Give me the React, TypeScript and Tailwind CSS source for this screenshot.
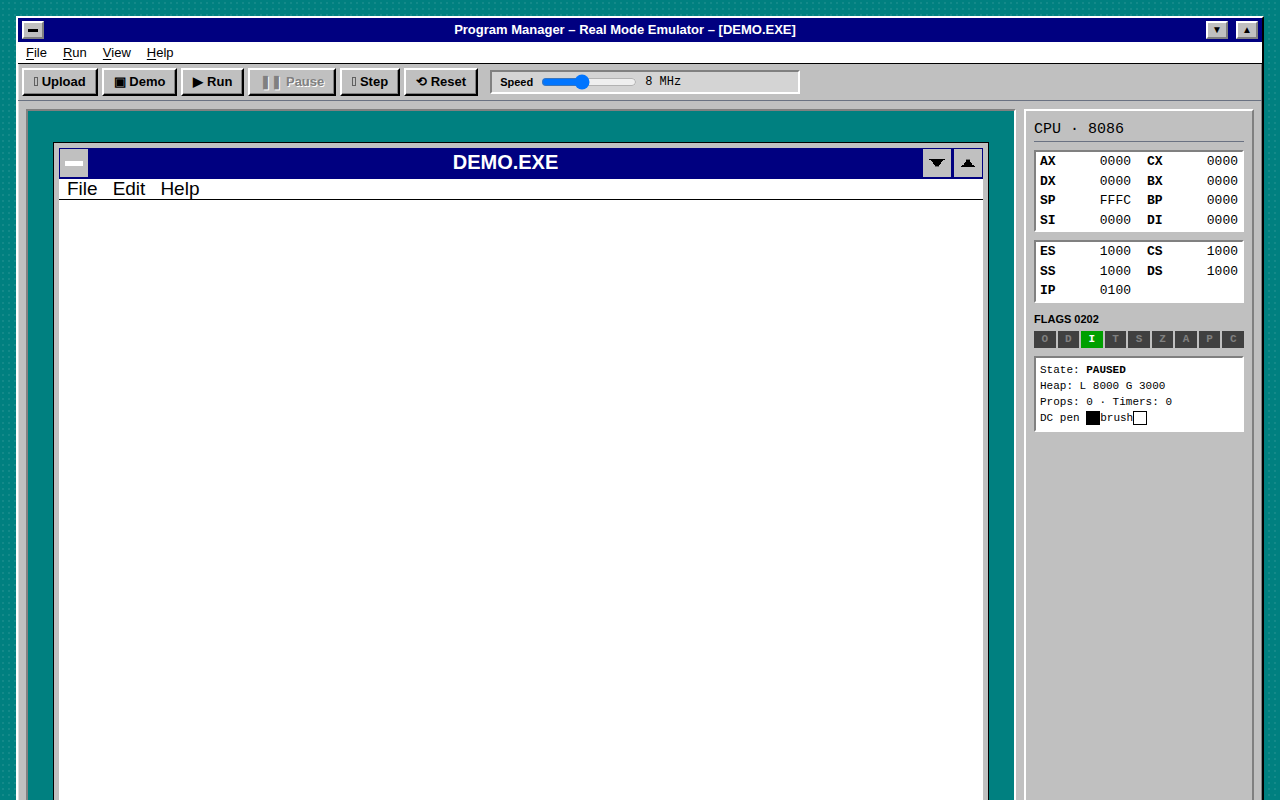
import { useState } from "react"
import type { ReactNode } from "react"

const menus = ["File", "Run", "View", "Help"]

// small outlined box, used by the tools that have no symbol of their own
const boxIcon = <span className="inline-block h-[9px] w-1 border border-[#606060]" />

const tools = [
  { icon: boxIcon, label: "Upload" },
  { icon: "▣", label: "Demo" },
  { icon: "▶", label: "Run" },
  { icon: "❚❚", label: "Pause", disabled: true },
  { icon: boxIcon, label: "Step" },
  { icon: "⟲", label: "Reset" },
]

const generalRegs = [
  ["AX", "0000"],
  ["CX", "0000"],
  ["DX", "0000"],
  ["BX", "0000"],
  ["SP", "FFFC"],
  ["BP", "0000"],
  ["SI", "0000"],
  ["DI", "0000"],
]

const segmentRegs = [
  ["ES", "1000"],
  ["CS", "1000"],
  ["SS", "1000"],
  ["DS", "1000"],
  ["IP", "0100"],
]

const flags = ["O", "D", "I", "T", "S", "Z", "A", "P", "C"]
const activeFlags = ["I"]

const sunken = "border-2 border-t-[#808080] border-l-[#808080] border-r-white border-b-white"

function TitleButton({ label, children }: { label: string; children: ReactNode }) {
  return (
    <button
      aria-label={label}
      className="flex h-[18px] w-[22px] items-center justify-center border-2 border-t-white border-l-white border-r-[#808080] border-b-[#808080] bg-[#c0c0c0] text-[10px] leading-none text-black"
    >
      {children}
    </button>
  )
}

function Registers({ regs, className }: { regs: string[][]; className: string }) {
  return (
    <dl className={`${sunken} ${className} grid grid-cols-2 gap-x-4 bg-white px-1 font-['Liberation_Mono',monospace] text-[13px] leading-[19px]`}>
      {regs.map(([name, value]) => (
        <div key={name} className="flex justify-between">
          <dt className="font-bold">{name}</dt>
          <dd>{value}</dd>
        </div>
      ))}
    </dl>
  )
}

function DemoWindow() {
  return (
    <div className="flex flex-1 flex-col border border-black bg-[#c0c0c0] p-[5px]">
      <div className="flex h-[31px] shrink-0 items-start bg-[#000080] p-px">
        <button aria-label="Program menu" className="flex size-7 items-center justify-center bg-[#c0c0c0]">
          <span className="h-[5px] w-[18px] bg-white" />
        </button>
        <h2 className="flex-1 text-center text-[20px] leading-[26px] font-bold text-white">DEMO.EXE</h2>
        <div className="flex gap-[3px]">
          <button aria-label="Minimize program" className="flex size-7 items-center justify-center bg-[#c0c0c0]">
            <svg width="16" height="10" viewBox="0 0 16 10">
              <path d="M0 1h16v1h-2v1h-1v1h-1v2h-1v1h-1v1H6V7H5V6H4V4H3V3H2V2H0z" />
              <path d="M6 8h4v1H6z" fill="#707070" />
            </svg>
          </button>
          <button aria-label="Maximize program" className="flex size-7 items-center justify-center bg-[#c0c0c0]">
            <svg width="16" height="10" viewBox="0 0 16 10">
              <path d="M1 9h14V8h-1V7h-2V5h-1V4h-1V2H6v2H5v1H4v2H2v1H1z" />
              <path d="M6 1h4v1H6z" fill="#707070" />
            </svg>
          </button>
        </div>
      </div>
      <div className="flex h-[21px] shrink-0 gap-[15px] border-b border-black bg-white px-2 text-[19px] leading-5">
        <button>File</button>
        <button>Edit</button>
        <button>Help</button>
      </div>
      <div className="flex-1 bg-white" />
    </div>
  )
}

function Toolbar() {
  const [speed, setSpeed] = useState(8)

  return (
    <div className="flex flex-wrap items-center gap-1 border-b border-gray-500 p-1">
      {tools.map((tool) => (
        <button
          key={tool.label}
          disabled={tool.disabled}
          className="h-7 border-2 border-t-white border-l-white border-r-black border-b-black bg-[#c0c0c0] px-[10px] text-[13px] leading-5 font-bold whitespace-nowrap shadow-[inset_-1px_-1px_0_#808080] disabled:text-[#808080] disabled:[text-shadow:1px_1px_0_#fff]"
        >
          {tool.icon} {tool.label}
        </button>
      ))}
      <div className={`${sunken} ml-2 flex h-6 w-[310px] items-center gap-2 bg-[#d4d4d4] px-2`}>
        <label htmlFor="speed" className="text-[11px] font-bold">
          Speed
        </label>
        <input
          id="speed"
          type="range"
          min={1}
          max={18}
          value={speed}
          onChange={(e) => setSpeed(Number(e.target.value))}
          className="w-24"
        />
        <output htmlFor="speed" className="font-['Liberation_Mono',monospace] text-xs">
          {speed} MHz
        </output>
      </div>
    </div>
  )
}

function CpuPanel() {
  return (
    <aside className="w-[230px] shrink-0 border-2 border-t-white border-l-white border-r-[#808080] border-b-[#808080] p-2">
      <h2 className="mb-2 border-b border-gray-500 font-['Liberation_Mono',monospace] text-[15px] leading-[22px]">
        CPU · 8086
      </h2>
      <Registers regs={generalRegs} className="mb-2 h-[82px]" />
      <Registers regs={segmentRegs} className="mb-2 h-[63px]" />

      <h3 className="mb-1 text-[11px] leading-4 font-bold">FLAGS 0202</h3>
      <div className="mb-2 grid grid-cols-9 gap-[2px] text-center font-['Liberation_Mono',monospace] text-[11px] leading-[17px] font-bold">
        {flags.map((flag) => (
          <span
            key={flag}
            className={activeFlags.includes(flag) ? "bg-[#00a000] text-white" : "bg-[#404040] text-[#808080]"}
          >
            {flag}
          </span>
        ))}
      </div>

      <div className={`${sunken} bg-white p-1 font-['Liberation_Mono',monospace] text-[11px] leading-4`}>
        <p>
          State: <b>PAUSED</b>
        </p>
        <p>Heap: L 8000 G 3000</p>
        <p>Props: 0 · Timers: 0</p>
        <p className="flex items-center whitespace-pre">
          <span>DC pen </span>
          <span className="size-[14px] border border-black bg-black" />
          <span>brush</span>
          <span className="size-[14px] border border-black bg-white" />
        </p>
      </div>
    </aside>
  )
}

export default function App() {
  return (
    <div className="min-h-screen bg-[#008080] bg-[radial-gradient(rgba(255,255,255,0.08)_1px,transparent_1px)] bg-[size:6px_6px] p-4 font-['Liberation_Sans',Arial,sans-serif] text-black">
      <main className="border-2 border-t-white border-l-white border-r-black border-b-black bg-[#c0c0c0] shadow-[inset_1px_1px_0_#dfdfdf,inset_-1px_-1px_0_#808080]">
        <header className="flex h-6 items-center bg-[#000080] px-1">
          <TitleButton label="Control menu">
            <span className="h-[3px] w-[10px] bg-black" />
          </TitleButton>
          <h1 className="flex-1 text-center text-[13px] leading-6 font-bold text-white">
            Program Manager – Real Mode Emulator – [DEMO.EXE]
          </h1>
          <div className="flex gap-2">
            <TitleButton label="Minimize">▼</TitleButton>
            <TitleButton label="Maximize">▲</TitleButton>
          </div>
        </header>

        <nav className="flex h-[22px] border-b border-black bg-white text-[13px] leading-[21px]">
          {menus.map((menu) => (
            <button key={menu} className="px-2">
              <u className="underline-offset-2">{menu[0]}</u>
              {menu.slice(1)}
            </button>
          ))}
        </nav>

        <Toolbar />

        <div className="flex gap-2 p-2">
          <section className={`${sunken} flex aspect-[4/3] min-w-0 flex-1 bg-[#008080] px-[25px] pt-[31px] pb-6`}>
            <DemoWindow />
          </section>
          <CpuPanel />
        </div>
      </main>
    </div>
  )
}
